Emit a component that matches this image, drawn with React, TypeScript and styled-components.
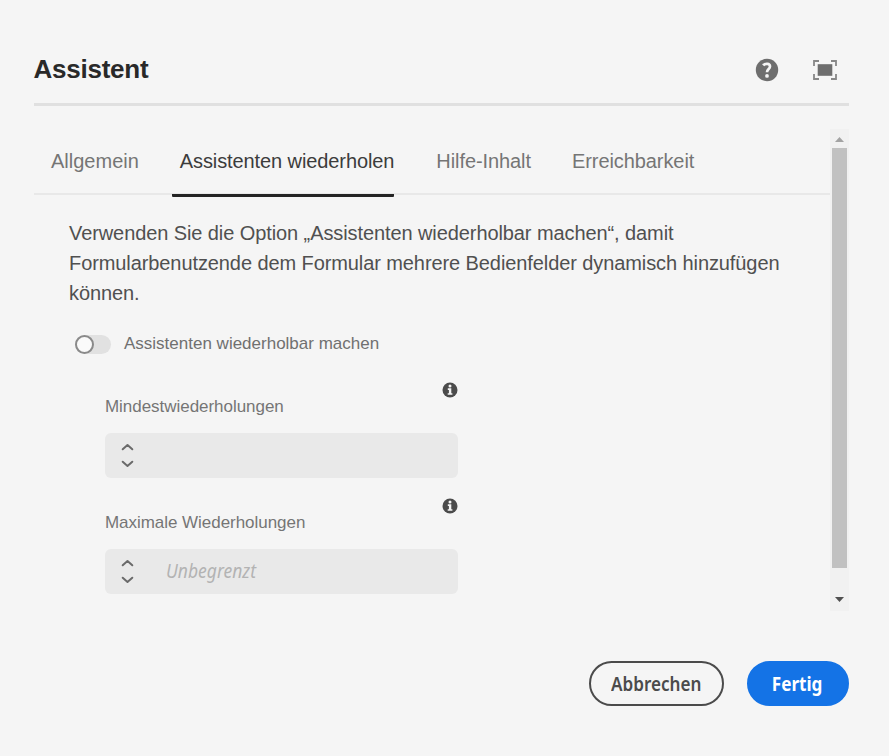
import React from 'react';
import styled, { createGlobalStyle } from 'styled-components';

const GlobalStyle = createGlobalStyle`
  * { box-sizing: border-box; }
  body {
    margin: 0;
    background: #f5f5f5;
    font-family: 'Liberation Sans', Arial, sans-serif;
  }
`;

const Dialog = styled.main`
  display: flex;
  flex-direction: column;
  width: 889px;
  height: 756px;
  padding: 0 40.5px 50px 33.5px;
  background: #f5f5f5;
  overflow: hidden;
`;

const Header = styled.header`
  display: flex;
  align-items: center;
  height: 106px;
  padding: 35px 11.5px 0 0;
  border-bottom: 3px solid #e0e0e0;
  flex: none;
`;

const Title = styled.h1`
  flex: 1;
  margin: 0;
  font-size: 26px;
  line-height: 30px;
  letter-spacing: -0.25px;
  color: #292929;
`;

const HeaderActions = styled.div`
  display: flex;
  align-items: center;
  gap: 34px;
  padding-top: 2px;
`;

const IconButton = styled.button`
  display: flex;
  padding: 0;
  border: 0;
  background: none;
`;

const ScrollArea = styled.section`
  display: flex;
  flex: none;
  height: 482px;
  margin-top: 23px;
`;

const Panel = styled.div`
  flex: 1;
  min-width: 0;
`;

const TabList = styled.nav`
  display: flex;
  height: 66px;
  padding-left: 9.5px;
  border-bottom: 2px solid #e8e8e8;
`;

const Tab = styled.button<{ $active?: boolean; $gap?: number; $spacing?: number }>`
  flex: none;
  height: 68px;
  margin: 0 0 0 ${(p) => p.$gap ?? 0}px;
  padding: 0 0 2px 8px;
  border: 0;
  border-bottom: 3px solid ${(p) => (p.$active ? '#242424' : 'transparent')};
  border-radius: 1px;
  background: none;
  font: 20px/24px 'Liberation Sans', Arial, sans-serif;
  letter-spacing: ${(p) => p.$spacing ?? 0}px;
  color: ${(p) => (p.$active ? '#3c3c3c' : '#757575')};
  white-space: nowrap;
`;

const Description = styled.p`
  margin: 23px 0 0 35.5px;
  font-size: 20px;
  line-height: 30px;
  letter-spacing: -0.09px;
  color: #505050;
  white-space: nowrap;
`;

const ToggleRow = styled.label`
  display: flex;
  align-items: center;
  gap: 13px;
  height: 20px;
  margin: 26px 0 0 41.5px;
  font-size: 17px;
  line-height: 20px;
  color: #707070;
`;

const Track = styled.span`
  display: flex;
  width: 36px;
  height: 19px;
  border-radius: 10px;
  background: #e1e1e1;
`;

const Knob = styled.span`
  width: 19px;
  height: 19px;
  border: 2px solid #8a8a8a;
  border-radius: 50%;
  background: #fafafa;
`;

const Field = styled.div<{ $top: number }>`
  display: flex;
  flex-direction: column;
  width: 353px;
  margin: ${(p) => p.$top}px 0 0 71.5px;
`;

const InfoRow = styled.div`
  display: flex;
  justify-content: flex-end;
  height: 15px;
  padding-right: 0.5px;
`;

const FieldLabel = styled.span`
  height: 20px;
  font-size: 17px;
  line-height: 20px;
  letter-spacing: -0.04px;
  color: #757575;
`;

const NumberBox = styled.div`
  display: flex;
  align-items: center;
  height: 45px;
  margin-top: 16px;
  padding-left: 16px;
  border-radius: 6px;
  background: #e9e9e9;
`;

const Stepper = styled.div`
  display: flex;
  flex-direction: column;
  gap: 9px;
  width: 45px;
`;

const Placeholder = styled.span`
  display: inline-block;
  margin-top: -2px;
  font: italic 19px/26px 'Noto Sans', sans-serif;
  color: #b3b3b3;
  transform: scaleX(0.92);
  transform-origin: left;
`;

const Scrollbar = styled.div`
  display: flex;
  flex-direction: column;
  align-items: center;
  justify-content: space-between;
  width: 19px;
  padding: 8px 0 9px;
  background: #f1f1f1;
`;

const Thumb = styled.div`
  width: 15px;
  height: 420px;
  margin: 6px 0 29px;
  background: #c1c1c1;
`;

const Footer = styled.footer`
  display: flex;
  justify-content: flex-end;
  gap: 23px;
  margin-top: 50px;
`;

const Button = styled.button<{ $primary?: boolean }>`
  display: flex;
  align-items: center;
  justify-content: center;
  width: ${(p) => (p.$primary ? 102 : 135)}px;
  height: 45px;
  padding: 0;
  border: 2px solid ${(p) => (p.$primary ? '#1473e6' : '#4b4b4b')};
  border-radius: 23px;
  background: ${(p) => (p.$primary ? '#1473e6' : 'transparent')};
  color: ${(p) => (p.$primary ? '#fff' : '#4b4b4b')};
  font: ${(p) => (p.$primary ? 700 : 600)} 19px/26px 'Noto Sans', sans-serif;
`;

const ButtonText = styled.span`
  display: inline-block;
  white-space: nowrap;
  transform: scaleX(0.9);
`;

const HelpIcon = () => (
  <svg width="24" height="24" viewBox="0 0 24 24">
    <circle cx="12" cy="12" r="11.2" fill="#6e6e6e" />
    <path d="M8.2 7.400C10 5.200 15 5.200 15 8.400C15 11 12 11 12 14.300" fill="none" stroke="#f5f5f5" strokeWidth="2.7" />
    <circle cx="12" cy="17.900" r="1.900" fill="#f5f5f5" />
  </svg>
);

const FullscreenIcon = () => (
  <svg width="24" height="20" viewBox="0 0 24 20">
    <path d="M1 6V1H6M18 1H23V6M23 14V19H18M6 19H1V14" fill="none" stroke="#888" strokeWidth="1.8" />
    <rect x="4.700" y="4.200" width="14.600" height="11.600" fill="#6e6e6e" />
  </svg>
);

const InfoIcon = () => (
  <svg width="16" height="16" viewBox="0 0 16 16">
    <circle cx="8" cy="8" r="7.500" fill="#4b4b4b" />
    <circle cx="8" cy="3.900" r="1.500" fill="#f5f5f5" />
    <path d="M5.800 6.300H9.300V11.200H10.400V12.800H5.700V11.200H6.900V7.900H5.800Z" fill="#f5f5f5" />
  </svg>
);

const Chevron = ({ down = false }: { down?: boolean }) => (
  <svg width="13" height="8" viewBox="0 0 13 8">
    <path
      d={down ? 'M1.700 1.700L6.500 5.900L11.300 1.700' : 'M1.700 6.300L6.500 2.100L11.300 6.300'}
      fill="none"
      stroke="#6a6a6a"
      strokeWidth="2"
      strokeLinecap="round"
      strokeLinejoin="round"
    />
  </svg>
);

const ScrollArrow = ({ down = false }: { down?: boolean }) => (
  <svg width="9" height="5" viewBox="0 0 9 5">
    <path d={down ? 'M0 0H9L4.500 5Z' : 'M0 5H9L4.500 0Z'} fill={down ? '#505050' : '#a3a3a3'} />
  </svg>
);

const NumberField = ({ label, placeholder, top }: { label: string; placeholder?: string; top: number }) => (
  <Field $top={top}>
    <InfoRow>
      <InfoIcon />
    </InfoRow>
    <FieldLabel>{label}</FieldLabel>
    <NumberBox>
      <Stepper>
        <Chevron />
        <Chevron down />
      </Stepper>
      {placeholder && <Placeholder>{placeholder}</Placeholder>}
    </NumberBox>
  </Field>
);

export default function App() {
  return (
    <>
      <GlobalStyle />
      <Dialog>
        <Header>
          <Title>Assistent</Title>
          <HeaderActions>
            <IconButton aria-label="Hilfe">
              <HelpIcon />
            </IconButton>
            <IconButton aria-label="Vollbild">
              <FullscreenIcon />
            </IconButton>
          </HeaderActions>
        </Header>
        <ScrollArea>
          <Panel>
            <TabList>
              <Tab>Allgemein</Tab>
              <Tab $active $gap={33} $spacing={-0.1}>
                Assistenten wiederholen
              </Tab>
              <Tab $gap={34} $spacing={-0.08}>
                Hilfe-Inhalt
              </Tab>
              <Tab $gap={33} $spacing={-0.08}>
                Erreichbarkeit
              </Tab>
            </TabList>
            <Description>
              Verwenden Sie die Option „Assistenten wiederholbar machen“, damit
              <br />
              Formularbenutzende dem Formular mehrere Bedienfelder dynamisch hinzufügen
              <br />
              können.
            </Description>
            <ToggleRow>
              <Track>
                <Knob />
              </Track>
              Assistenten wiederholbar machen
            </ToggleRow>
            <NumberField label="Mindestwiederholungen" top={28} />
            <NumberField label="Maximale Wiederholungen" placeholder="Unbegrenzt" top={20} />
          </Panel>
          <Scrollbar>
            <ScrollArrow />
            <Thumb />
            <ScrollArrow down />
          </Scrollbar>
        </ScrollArea>
        <Footer>
          <Button>
            <ButtonText>Abbrechen</ButtonText>
          </Button>
          <Button $primary>
            <ButtonText>Fertig</ButtonText>
          </Button>
        </Footer>
      </Dialog>
    </>
  );
}
